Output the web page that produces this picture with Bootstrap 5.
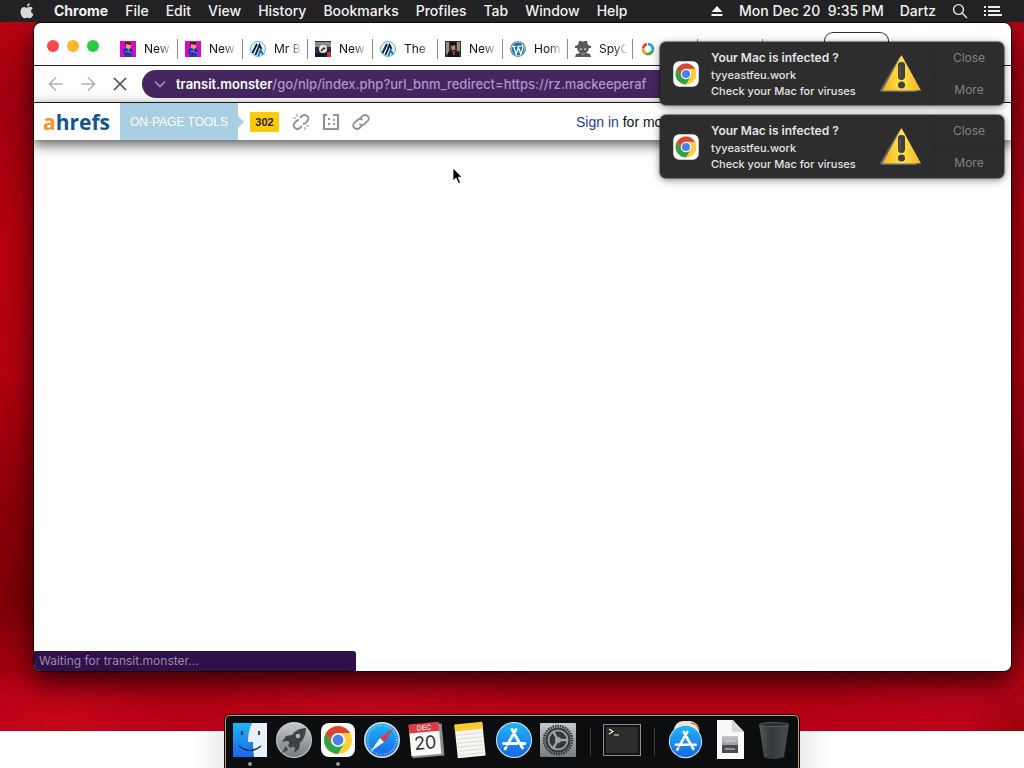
<!DOCTYPE html>
<html lang="en">
<head>
<meta charset="utf-8">
<meta name="viewport" content="width=device-width, initial-scale=1">
<title>Desktop</title>
<link href="https://cdn.jsdelivr.net/npm/bootstrap@5.3.0/dist/css/bootstrap.min.css" rel="stylesheet">
<style>
  body { font-family: Inter, "Liberation Sans", sans-serif; color: #111; background: #fff; line-height: 20px; }
  svg { display: block; flex: none; }
  button { border: 0; background: none; padding: 0; color: inherit; }
  a { text-decoration: none; }

  /* menu bar */
  .menubar { height: 22px; background: #222224; color: #f2f2f2; font-size: 14px; font-weight: 500; line-height: 22px; padding: 0 22px 0 20px; white-space: nowrap; z-index: 2; }
  .menubar a { color: inherit; }
  .menus { gap: 17px; }

  /* desktop and browser window */
  .wallpaper { padding: 1px 13px 60px 34px; overflow: hidden;
    background:
      radial-gradient(ellipse 120px 50px at 6% 98%, #cf0a1eaa, transparent),
      radial-gradient(ellipse 200px 60px at 36% 97%, #c80a1e99, transparent),
      radial-gradient(ellipse 180px 70px at 95% 93%, #d20c2066, transparent),
      radial-gradient(ellipse 60px 60px at 100% 100%, #8a0006cc, transparent),
      linear-gradient(180deg, #b60412 0, #a00010 12%, #b5000f 32%, #b00010 50%, #8a0008 68%, #7a0006 82%, #b00012 94%, #b80016 100%); }
  .browser { background: #fff; border-radius: 7px; box-shadow: 0 0 0 1px #1a0004, 0 12px 28px 0 #000000b0; overflow: hidden; min-width: 0; }
  .tabstrip { height: 43px; border-bottom: 1px solid #222; padding-left: 13px; font-size: 12px; }
  .lights { gap: 8px; width: 66px; height: 27px; align-self: center; }
  .light { width: 12px; height: 12px; border-radius: 50%; }
  .light-close { background: #f7474f; }
  .light-min { background: #fdb827; }
  .light-zoom { background: #2acb42; }
  .tabs { padding-bottom: 6px; }
  .tab { width: 65px; height: 20px; padding: 0 0 0 7px; gap: 8px; border-right: 1px solid #8b8b8b; white-space: nowrap; }
  .tab-title { width: 32px; -webkit-mask-image: linear-gradient(90deg, #000 45%, #0000 90%); mask-image: linear-gradient(90deg, #000 45%, #0000 90%); }
  .tab-current { width: 65px; height: 33px; border: 1px solid #333; border-bottom: 0; border-radius: 9px 9px 0 0; margin-left: -4px; }
  .toolbar { height: 37px; border-bottom: 1px solid #222; padding: 0 14px 0 13px; gap: 14px; }
  .omnibox { height: 28px; border-radius: 14px; background: #45265f; font-size: 13px; font-weight: 600; padding: 0 10px; margin-left: -1px; }
  .omnibox label { color: #fff; margin-left: 8px; }
  .omnibox input { background: none; border: 0; outline: 0; padding: 0; color: #b393c9; font-weight: 500; }
  .seobar { height: 37px; padding-left: 9px; box-shadow: 0 4px 12px 1px #000000a0; font-family: "Liberation Sans", Arial, sans-serif; font-size: 14px; z-index: 1; }
  .logo { width: 77px; font: 700 21px/34px "Open Sans", sans-serif; color: #14558f; }
  .logo span { color: #f7942a; }
  .tools-tag { background: #a9cfe3; color: #fff; font-size: 12px; height: 37px; width: 118px; }
  .tools-arrow { border-left: 6px solid #a9cfe3; border-top: 6px solid transparent; border-bottom: 6px solid transparent; }
  .status-code { background: #fbcb09; color: #222; font-size: 11px; font-weight: 700; width: 29px; height: 20px; border-radius: 1px; margin: 0 13px 0 6px; }
  .seo-icons { gap: 12px; }
  .signin { margin-left: auto; width: 435px; }
  .signin a { color: #1a4096; }
  .statusline { background: #30104a; color: #9b88a8; font-size: 12px; width: 33%; height: 20px; padding-left: 5px; border-radius: 0 3px 0 0; }
  .pointer { left: 452px; top: 167px; z-index: 3; }

  /* notifications */
  .notices { top: 42px; right: 20px; gap: 10px; z-index: 3; }
  .notice { width: 344px; height: 63px; border-radius: 6px; background: #2d2d2d; box-shadow: 0 0 1px 1px #0006, 0 2px 9px #0007; color: #e4e4e4; font-size: 11px; font-weight: 500; line-height: 16px; padding-left: 11px; }
  .notice h2 { font-size: 12px; line-height: 18px; font-weight: 600; margin: 0; }
  .notice-body { gap: 10px; padding-right: 11px; }
  .notice-actions { width: 71px; border-left: 1px solid #262626; color: #818181; font-size: 12px; }
  .notice-actions button + button { border-top: 1px solid #262626; }

  /* dock */
  .shelf { height: 37px; background: linear-gradient(90deg, #fff 19%, #e4e4e4 23%, #e4e4e4 77%, #fff 81%); }
  .dock { background: #0b0d0e; border: 1px solid #b59a80; border-bottom: 0; border-radius: 5px 5px 0 0; padding: 4px 4px 0; gap: 4px; height: 53px; bottom: 0; box-shadow: 0 0 0 1px #1a0a08; z-index: 2; }
  .dock-rule { width: 16px; height: 40px; }
  .dock-rule::before { content: ""; display: block; width: 1px; height: 28px; margin: 8px 0 0 8px; background: #3c3c3c; }
  .dock-item { width: 40px; height: 48px; }
  .running::after { content: ""; display: block; width: 4px; height: 4px; border-radius: 50%; background: #999; margin: 2px auto 0; }
</style>
</head>
<body class="vh-100 d-flex flex-column overflow-hidden position-relative">

<svg width="0" height="0" class="position-absolute" aria-hidden="true">
  <defs>
    <linearGradient id="blue" x2="0" y2="1"><stop stop-color="#20b5f5"/><stop offset="1" stop-color="#1867e8"/></linearGradient>
    <linearGradient id="grey" x2="0" y2="1"><stop stop-color="#c4c8ca"/><stop offset="1" stop-color="#777c7f"/></linearGradient>
    <linearGradient id="gold" x2="1" y2="0"><stop stop-color="#f3b71d"/><stop offset=".5" stop-color="#ffe04e"/><stop offset="1" stop-color="#f5b420"/></linearGradient>
    <linearGradient id="bin" x2="1" y2="0"><stop stop-color="#565a5b"/><stop offset=".4" stop-color="#34383a"/><stop offset="1" stop-color="#4a4e50"/></linearGradient>
  </defs>
  <symbol id="chrome" viewBox="0 0 40 40">
    <rect x="3" y="3" width="34" height="34" rx="8" fill="#fbfbfb"/>
    <circle cx="20" cy="20" r="14" fill="#fdd03b"/>
    <path d="M7.900 13A14 14 0 0 0 20 34L26 23.500H14z" fill="#2ba24c"/>
    <path d="M7.900 13A14 14 0 0 1 32.100 13H20L14 23.500z" fill="#d94437"/>
    <circle cx="20" cy="20" r="7" fill="#fff"/><circle cx="20" cy="20" r="5.400" fill="#4a80ea"/>
  </symbol>
  <symbol id="warning" viewBox="0 0 42 42">
    <path d="M20 3 0 37l1 2h36z" fill="#64686d"/>
    <path d="M21.500 2 2.500 37.500H41z" fill="url(#gold)"/>
    <path d="M18 12q0-3 3.500-3t3.500 3v11q0 4-3.500 4T18 23z" fill="#3f4040"/><circle cx="21.500" cy="32" r="3.500" fill="#3f4040"/>
    <path d="M20 12v12" stroke="#686754" stroke-width="1"/>
  </symbol>
  <symbol id="appstore" viewBox="0 0 40 40">
    <circle cx="20" cy="20" r="18" fill="#d9eefb"/><circle cx="20" cy="20" r="17" fill="url(#blue)"/>
    <g stroke="#fff" stroke-width="2.800" stroke-linecap="round" fill="none"><path d="M18 9.500 28.500 28M22 9.500l-8.500 15M9.500 23.500H23M27 23.500h4M12 27.500l-.8 1.300"/></g>
    <path d="m18.500 15-4.500 8M20.500 17l3.500 6" stroke="#b8dcfb" stroke-width=".7"/>
  </symbol>
  <symbol id="fav-boy" viewBox="0 0 16 16">
    <path fill="#d80bc3" d="M0 0h16v16H0z"/><path fill="#1d3aa8" d="M4 7h7l2 3-1 3-1 3H5l-1-3-1-3z"/><path fill="#e59a7c" d="M6 3h5v4l-2 1-3-1z"/><path fill="#4a1d26" d="M5 1h6v3L6 3v2H5z"/><path fill="#f04f7c" d="M8 8h1v3H8z"/><path fill="#4b83d5" d="M5 10h3v1H5zm4 1h3v1H9z"/>
  </symbol>
  <symbol id="fav-blaze" viewBox="0 0 16 16">
    <circle cx="8" cy="8" r="7.500" fill="#e3f2fa" stroke="#69aedb"/><path d="M2.500 12 7 3M5.500 14 9.500 4l2 4" fill="none" stroke="#0e2032" stroke-width="1.900"/><path d="m8.500 15 2-6 2.500 4.500" fill="none" stroke="#1c71bb" stroke-width="1.900"/>
  </symbol>
  <symbol id="fav-photo" viewBox="0 0 16 16">
    <path fill="#2c2948" d="M0 0h16v16H0z"/><path fill="#8b8b94" d="M0 1h16v5H0z"/><circle cx="8" cy="8" r="4" fill="#efe8db"/><path d="m6 10 3-3 1 1" stroke="#222" fill="none" stroke-width="1.500"/><path fill="#111a2b" d="M0 12h12v4H0z"/><path fill="#c63230" d="M12 11h4v5h-4z"/>
  </symbol>
  <symbol id="fav-face" viewBox="0 0 16 16">
    <path fill="#36352c" d="M0 0h16v16H0z"/><path fill="#918f80" d="M1 1h3v12H1zm11 0h3v9h-3z"/><path fill="#b88e78" d="M6 4h4v5H7z"/><path fill="#181414" d="M5 1h6v3L6 5zM3 11l5-2 6 3v4H3z"/><path fill="#a62d34" d="M7 10h3v4H8z"/>
  </symbol>
  <symbol id="fav-wp" viewBox="0 0 16 16">
    <circle cx="8" cy="8" r="7.800" fill="#207196"/><circle cx="8" cy="8" r="6.700" fill="none" stroke="#d6edf4" stroke-width=".7"/><path d="M2 5.300h4M3.500 5.500 6.200 13 8.300 7M7.300 5.300h4M8 5.500l2.800 7.500 2-6q.4-2-1-3.500" fill="none" stroke="#fff" stroke-width="1.300"/>
  </symbol>
  <symbol id="fav-spy" viewBox="0 0 16 16">
    <path fill="#55585c" d="M3 4 4 0h3l1 1 1-1h3l1 4 3 1v2H0V5zM2 7h12l-1 3-2 2 4 1 1 3H0l1-3 4-1-2-2z"/><path fill="#fff" d="M4.500 7.500H7V9H5zm4.500 0h2.500L11 9H9zM5.500 12l2.500 1 2.500-1L8 14z" opacity=".65"/>
  </symbol>
  <symbol id="fav-ring" viewBox="0 0 16 16" fill="none">
    <g stroke-width="2.600"><path d="M8 3a5 5 0 0 1 4.700 6.500" stroke="#159ddb"/><path d="M12.700 9.500A5 5 0 0 1 6 12.600" stroke="#31ad45"/><path d="M6 12.600A5 5 0 0 1 3.200 7" stroke="#f59519"/><path d="M3.200 7A5 5 0 0 1 7 3.100" stroke="#e63b38"/></g>
  </symbol>
</svg>

<header class="menubar d-flex align-items-center flex-shrink-0">
  <svg width="14" height="16" viewBox="0 0 14 16" fill="#d9d9d9" aria-label="Apple"><path d="M9.700 0q.2 1.500-.7 2.500T6.900 3.600Q6.700 2.200 7.600 1.200T9.700 0zM7 4.700c.7 0 1.600-.9 3-.9 1.200 0 2.300.7 2.800 1.500-2.500 1.500-2.200 4.700.6 5.800-.6 1.900-2 4.200-3.400 4.200-1 0-1.500-.6-2.700-.6s-1.700.6-2.600.6C2.900 15.300.5 11.800.5 8.700c0-3 1.800-4.800 3.800-4.800 1.200 0 2 .8 2.700.8z"/></svg>
  <nav class="menus d-flex ms-3 ps-1">
    <a href="#" class="fw-bold">Chrome</a><a href="#">File</a><a href="#">Edit</a><a href="#">View</a><a href="#">History</a><a href="#">Bookmarks</a><a href="#">Profiles</a><a href="#">Tab</a><a href="#">Window</a><a href="#">Help</a>
  </nav>
  <div class="d-flex align-items-center ms-auto gap-3">
    <svg width="12" height="12" viewBox="0 0 12 12" fill="#f2f2f2"><path d="m6 1 5.500 6H.5zM.5 9h11v2H.5z"/></svg>
    <span>Mon Dec 20&nbsp; 9:35 PM</span>
    <span>Dartz</span>
    <svg width="16" height="16" viewBox="0 0 16 16" fill="none" stroke="#e5e5e5" stroke-width="1.400"><circle cx="6.500" cy="6.500" r="4.900"/><path d="m10 10 5 5"/></svg>
    <svg width="18" height="12" viewBox="0 0 18 12" fill="#eee"><path d="M0 1h2v2H0zm0 4h2v2H0zm0 4h2v2H0zM4 1h12v2H4zm0 4h12v2H4zm0 4h14v2H4z"/></svg>
  </div>
</header>

<main class="wallpaper flex-fill d-flex">
  <section class="browser flex-fill d-flex flex-column">
    <div class="tabstrip d-flex align-items-end flex-shrink-0">
      <div class="lights d-flex align-items-center flex-shrink-0 pt-1">
        <button class="light light-close" aria-label="Close window"></button>
        <button class="light light-min" aria-label="Minimise"></button>
        <button class="light light-zoom" aria-label="Zoom"></button>
      </div>
      <div class="d-flex align-items-end">
        <div class="tabs d-flex">
          <div class="tab d-flex align-items-center"><svg width="16" height="16"><use href="#fav-boy"/></svg><span class="tab-title">New</span></div>
          <div class="tab d-flex align-items-center"><svg width="16" height="16"><use href="#fav-boy"/></svg><span class="tab-title">New</span></div>
          <div class="tab d-flex align-items-center"><svg width="16" height="16"><use href="#fav-blaze"/></svg><span class="tab-title">Mr B</span></div>
          <div class="tab d-flex align-items-center"><svg width="16" height="16"><use href="#fav-photo"/></svg><span class="tab-title">New</span></div>
          <div class="tab d-flex align-items-center"><svg width="16" height="16"><use href="#fav-blaze"/></svg><span class="tab-title">The</span></div>
          <div class="tab d-flex align-items-center"><svg width="16" height="16"><use href="#fav-face"/></svg><span class="tab-title">New</span></div>
          <div class="tab d-flex align-items-center"><svg width="16" height="16"><use href="#fav-wp"/></svg><span class="tab-title">Hom</span></div>
          <div class="tab d-flex align-items-center"><svg width="16" height="16"><use href="#fav-spy"/></svg><span class="tab-title">SpyC</span></div>
          <div class="tab d-flex align-items-center"><svg width="16" height="16"><use href="#fav-ring"/></svg></div>
          <div class="tab"></div>
          <div class="tab border-0"></div>
        </div>
        <div class="tab-current"></div>
      </div>
    </div>

    <div class="toolbar d-flex align-items-center flex-shrink-0">
      <button aria-label="Back"><svg width="18" height="18" viewBox="0 0 18 18" fill="none" stroke="#b4b4b4" stroke-width="1.700"><path d="M16 9H3M9 2.500 2.500 9 9 15.500"/></svg></button>
      <button aria-label="Forward"><svg width="18" height="18" viewBox="0 0 18 18" fill="none" stroke="#b4b4b4" stroke-width="1.700"><path d="M2 9h13M9 2.500 15.500 9 9 15.500"/></svg></button>
      <button aria-label="Stop"><svg width="18" height="18" viewBox="0 0 18 18" fill="none" stroke="#4f4f4f" stroke-width="1.700"><path d="m3 3 12 12M15 3 3 15"/></svg></button>
      <div class="omnibox flex-fill d-flex align-items-center">
        <svg width="16" height="16" viewBox="0 0 16 16" fill="none" stroke="#b393c9" stroke-width="1.500"><path d="m3 5.500 5 5 5-5"/></svg>
        <label for="address">transit.monster</label>
        <input id="address" type="text" class="flex-fill" value="/go/nlp/index.php?url_bnm_redirect=https://rz.mackeeperaf">
      </div>
    </div>

    <div class="seobar bg-white d-flex align-items-center flex-shrink-0 position-relative">
      <div class="logo"><span>a</span>hrefs</div>
      <div class="tools-tag d-flex align-items-center justify-content-center">ON-PAGE TOOLS</div>
      <div class="tools-arrow"></div>
      <div class="status-code d-flex align-items-center justify-content-center">302</div>
      <div class="seo-icons d-flex">
        <button aria-label="Broken links"><svg width="18" height="18" viewBox="0 0 18 18" fill="none" stroke="#929292" stroke-width="1.800"><path d="M8 5 10 3q2.500-2 5 0t.5 5l-2 2q-1 1-2.500 1M10 13l-2 2q-2.500 2-5 0t-.5-5l2-2q1-1 2.500-1"/><path d="M5 1v3M1 5h3M13 14v3M14 13h3" stroke-width="1"/></svg></button>
        <button aria-label="Page report"><svg width="18" height="18" viewBox="0 0 18 18" fill="none" stroke="#929292" stroke-width="2.200"><path d="M5 2H2v14h14V2h-5"/><path d="M6 6h2M6 11h2M12 6v2M12 10v2" stroke-width="1.800"/></svg></button>
        <button aria-label="Link highlighter"><svg width="18" height="18" viewBox="0 0 18 18" fill="none" stroke="#929292" stroke-width="1.800"><path d="M7 6.500 10.500 3q2.500-2 5 0t.2 5L12 11.500q-2.500 1.500-4.500-.5M11 11.500 7.500 15q-2.500 2-5 0T2.300 10L6 6.500Q8.500 5 10.500 7"/></svg></button>
      </div>
      <div class="signin text-nowrap"><a href="#">Sign in</a> for more</div>
    </div>

    <div class="flex-fill"></div>
    <div class="statusline flex-shrink-0">Waiting for transit.monster...</div>
  </section>
</main>

<div class="shelf flex-shrink-0"></div>

<aside class="notices position-absolute d-flex flex-column">
  <div class="notice d-flex align-items-stretch">
    <div class="notice-body d-flex align-items-center flex-fill">
      <svg width="30" height="30"><use href="#chrome"/></svg>
      <div class="flex-fill"><h2>Your Mac is infected ?</h2><div>tyyeastfeu.work</div><div>Check your Mac for viruses</div></div>
      <svg width="42" height="42"><use href="#warning"/></svg>
    </div>
    <div class="notice-actions d-flex flex-column"><button class="flex-fill">Close</button><button class="flex-fill">More</button></div>
  </div>
  <div class="notice d-flex align-items-stretch">
    <div class="notice-body d-flex align-items-center flex-fill">
      <svg width="30" height="30"><use href="#chrome"/></svg>
      <div class="flex-fill"><h2>Your Mac is infected ?</h2><div>tyyeastfeu.work</div><div>Check your Mac for viruses</div></div>
      <svg width="42" height="42"><use href="#warning"/></svg>
    </div>
    <div class="notice-actions d-flex flex-column"><button class="flex-fill">Close</button><button class="flex-fill">More</button></div>
  </div>
</aside>

<svg class="pointer position-absolute" width="12" height="18" viewBox="0 0 12 18"><path d="M1 1v13l3-3 2.500 5.500 2-1L6.200 10.200H10z" fill="#000" stroke="#fff" stroke-width=".8"/></svg>

<nav class="dock position-absolute start-50 translate-middle-x d-flex">
  <a href="#" class="dock-item running" aria-label="Finder"><svg width="40" height="40" viewBox="0 0 40 40"><path fill="#e9f1f8" d="M3 3h34v34H3z"/><path fill="url(#blue)" d="M3 3h19q-4 8-4 19h5q0 8 1 15H3z"/><path d="M12 11v4M29 11v4" stroke="#12304f" stroke-width="1.800"/><path d="M9 26q11 9 22 0" fill="none" stroke="#12304f" stroke-width="1.600"/></svg></a>
  <a href="#" class="dock-item" aria-label="Launchpad"><svg width="40" height="40" viewBox="0 0 40 40"><circle cx="20" cy="20" r="18" fill="#c9cccd"/><circle cx="20" cy="20" r="17" fill="url(#grey)"/><path fill="#3c4245" d="M32 8q-9 0-14 7l-6 1-4 6 6-1 1.500 1.500-1.500 3 2.500 2.500 3-1.500L21 28l-1 5 5-4 1-6q6-6 6-15zM12 26l-4 7 6-3z"/><circle cx="24" cy="16" r="2.300" fill="#aeb3b5"/></svg></a>
  <a href="#" class="dock-item running" aria-label="Chrome"><svg width="40" height="40"><use href="#chrome"/></svg></a>
  <a href="#" class="dock-item" aria-label="Safari"><svg width="40" height="40" viewBox="0 0 40 40"><circle cx="20" cy="20" r="18" fill="#dce3e7"/><circle cx="20" cy="20" r="16.500" fill="url(#blue)"/><circle cx="20" cy="20" r="14.500" fill="none" stroke="#9fdcfa" stroke-width="2" stroke-dasharray=".7 1.800"/><path fill="#e3383c" d="M32 8 18 18l4 4z"/><path fill="#f3f3f3" d="M8 32 18 18l4 4z"/></svg></a>
  <a href="#" class="dock-item" aria-label="Calendar"><svg width="40" height="40" viewBox="0 0 40 40"><g transform="rotate(-5 20 20)"><path fill="#8d8d8d" d="M5 5h32v32H5z"/><path fill="#fafafa" d="M4 4h30v31H4z"/><path fill="#dd3d42" d="M4 3h30v9H4z"/><g text-anchor="middle" font-family="Inter, sans-serif"><text x="19" y="10" font-size="7" fill="#fff">DEC</text><text x="19" y="29" font-size="18" fill="#333">20</text></g></g></svg></a>
  <a href="#" class="dock-item" aria-label="Notes"><svg width="40" height="40" viewBox="0 0 40 40"><g transform="rotate(-6 20 20)"><path fill="#f8f6f0" d="M6 4h28v33H6z"/><path fill="#f6cc2e" d="M6 3h28v7H6z"/><path d="M7 14h26M7 18h26M7 22h26M7 26h26M7 30h26M7 34h26" stroke="#d8d5cf" stroke-width=".8"/></g></svg></a>
  <a href="#" class="dock-item" aria-label="App Store"><svg width="40" height="40"><use href="#appstore"/></svg></a>
  <a href="#" class="dock-item" aria-label="System Preferences"><svg width="40" height="40" viewBox="0 0 40 40"><rect x="2" y="3" width="36" height="34" rx="1" fill="url(#grey)"/><circle cx="20" cy="20" r="14" fill="none" stroke="#2c2f31" stroke-width="2.500" stroke-dasharray="1.500 1"/><circle cx="20" cy="20" r="12.500" fill="#333638"/><circle cx="20" cy="20" r="9.500" fill="none" stroke="#94999b" stroke-width="2"/><path d="M20 20h10M20 20l-5-8.700M20 20l-5 8.700" stroke="#a0a4a6" stroke-width="2.400"/><circle cx="20" cy="20" r="3" fill="#a0a4a6"/></svg></a>
  <div class="dock-rule"></div>
  <a href="#" class="dock-item" aria-label="Terminal"><svg width="40" height="40" viewBox="0 0 40 40"><path fill="#8b8b8b" d="M1 4h38v32H1z"/><path fill="#151515" d="M2 5h36v30H2z"/><path fill="#2d2e2c" d="M4 7h32v26H4z"/><path d="m7 9 4 2.500L7 14M12 15h5" fill="none" stroke="#eee" stroke-width="1.200"/></svg></a>
  <div class="dock-rule"></div>
  <a href="#" class="dock-item" aria-label="Applications"><svg width="40" height="40" viewBox="0 0 40 40"><rect x="8" y="1" width="25" height="20" rx="9" fill="#eee5d6"/><path d="M25 3q6 0 8 7" stroke="#d97b35" stroke-width="1.500" fill="none"/><use href="#appstore" x="1" y="3" width="37" height="37"/></svg></a>
  <a href="#" class="dock-item" aria-label="Downloads"><svg width="40" height="40" viewBox="0 0 40 40"><path fill="#fafafa" d="M7 0h16l11 12v27H7z"/><path fill="#d8d8d8" d="M22 0v12h12z"/><rect x="12" y="16" width="16" height="17" fill="url(#grey)"/><path fill="#4b4e50" d="M12 25h16v8H12z"/><path d="M15 21h10M15 29h10" stroke="#ddd"/></svg></a>
  <a href="#" class="dock-item" aria-label="Trash"><svg width="40" height="40" viewBox="0 0 40 40"><path fill="url(#bin)" d="M5 4q15-3 30 0l-5 33q-10 4-20 0z"/><ellipse cx="20" cy="4.500" rx="14.500" ry="2" fill="#292c2d" stroke="#606465" stroke-width=".8"/></svg></a>
</nav>

<script src="https://cdn.jsdelivr.net/npm/bootstrap@5.3.0/dist/js/bootstrap.bundle.min.js"></script>
</body>
</html>
